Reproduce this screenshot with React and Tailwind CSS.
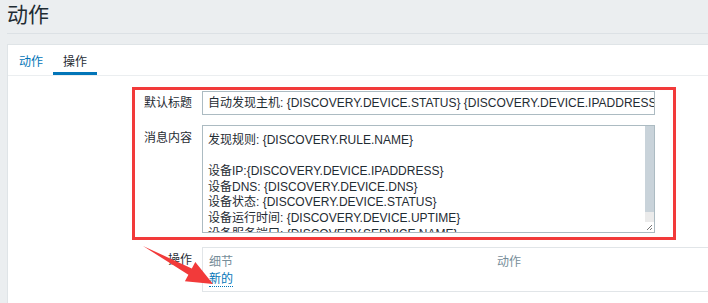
import React from 'react';

const font = { fontFamily: '"Liberation Sans", "Noto Sans CJK SC", sans-serif' };

const messageLines = [
  '发现规则: {DISCOVERY.RULE.NAME}',
  '',
  '设备IP:{DISCOVERY.DEVICE.IPADDRESS}',
  '设备DNS: {DISCOVERY.DEVICE.DNS}',
  '设备状态: {DISCOVERY.DEVICE.STATUS}',
  '设备运行时间: {DISCOVERY.DEVICE.UPTIME}',
  '设备服务端口: {DISCOVERY.SERVICE.NAME}',
];

export default function App() {
  return (
    <div className="relative h-[303px] overflow-hidden bg-[#ebeef0] pl-[7px] text-[#1f2c33]" style={font}>
      {/* Page title */}
      <div className="h-[34px] border-b border-[#dce1e5] pt-[1px] text-[21px] leading-[28px]">动作</div>

      {/* Main panel */}
      <div className="mt-[10px] h-[260px] border-l border-t border-[#dfe4e7] bg-white">
        <div className="flex h-[31px] border-b border-[#ebeef0] pl-px text-[12px]">
          <div className="px-[10px] pt-[8px] text-[#0275b8]">动作</div>
          <div className="border-b-[3px] border-[#0275b8] px-[10px] pt-[8px]">操作</div>
        </div>

        <div className="flex flex-col pt-[15px] text-[12px]">
          {/* Default subject */}
          <div className="flex items-center">
            <div className="w-[194px] pr-[10px] text-right">默认标题</div>
            <div className="flex h-[24px] w-[453px] items-center overflow-hidden whitespace-nowrap border border-[#acbbc2] px-[5px]">
              自动发现主机: {'{DISCOVERY.DEVICE.STATUS} {DISCOVERY.DEVICE.IPADDRESS}'}
            </div>
          </div>

          {/* Message */}
          <div className="mt-[10px] flex items-start">
            <div className="w-[194px] pr-[10px] pt-[4px] text-right">消息内容</div>
            <div className="flex h-[108px] w-[453px] border border-[#acbbc2]">
              <div className="flex-1 overflow-hidden whitespace-nowrap px-[5px] pt-[7px] leading-[15.6px]">
                {messageLines.map((line, i) => (
                  <div key={i} className="h-[15.6px]">{line}</div>
                ))}
              </div>
              <div className="flex w-[9px] flex-col">
                <div className="flex-1 bg-[#c9d3da]"></div>
                <div className="h-[10px] bg-[#ebebeb]"></div>
                <div className="relative h-[10px] bg-white">
                  <svg width="9" height="10" className="absolute inset-0">
                    <path d="M2 8 L7 3 M5 8 L7 6" stroke="#777" strokeWidth="1" />
                  </svg>
                </div>
              </div>
            </div>
          </div>

          {/* Operations */}
          <div className="mt-[14px] flex items-start">
            <div className="w-[194px] pr-[10px] pt-[4px] text-right">操作</div>
            <div className="h-[45px] flex-1 border-b border-l border-t border-[#e1e5e8] pl-[6px] pt-[5px]">
              <div className="flex text-[#768d99]">
                <div className="w-[288px]">细节</div>
                <div>动作</div>
              </div>
              <div className="-mt-px">
                <span className="border-b border-dotted border-[#0275b8] text-[#0275b8]">新的</span>
              </div>
            </div>
          </div>
        </div>
      </div>

      {/* Annotation: red box */}
      <div className="pointer-events-none absolute left-[132px] top-[87px] h-[153px] w-[544px] border-[3px] border-[#f23a3a]"></div>

      {/* Annotation: red arrow */}
      <svg className="pointer-events-none absolute left-0 top-0" width="708" height="303">
        <polygon
          points="143,246 191.8,268.5 195.3,261.9 213,284 184.9,281.3 188.4,274.7"
          fill="#f23a3a"
        />
      </svg>
    </div>
  );
}
